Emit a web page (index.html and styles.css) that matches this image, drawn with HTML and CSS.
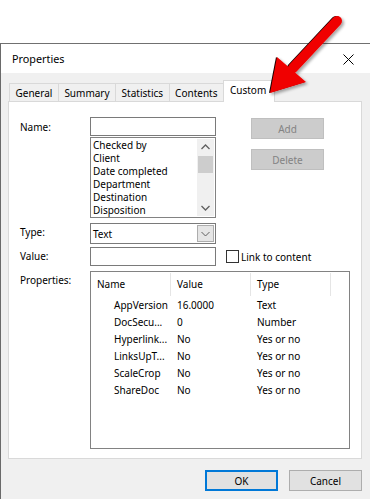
FILE: index.html
```html
<html>
    <head>
        <link rel="stylesheet" href="styles.css">
    </head>
    <body>
        <div class="window">
            <div class="titlebar">
                <span class="title">Properties</span>
                <svg class="close" width="11" height="11" viewBox="0 0 11 11">
                    <path d="M0.5 0.5 L10.5 10.5 M10.5 0.5 L0.5 10.5" stroke="#000" stroke-width="1"/>
                </svg>
            </div>
            <div class="client">
                <div class="tabs">
                    <span class="tab">General</span>
                    <span class="tab">Summary</span>
                    <span class="tab">Statistics</span>
                    <span class="tab">Contents</span>
                    <span class="tab active">Custom</span>
                </div>
                <div class="panel">
                    <div class="form">
                        <span class="label name-label">Name:</span>
                        <div class="field name-field"></div>
                        <div class="actions">
                            <button type="button" class="btn disabled">Add</button>
                            <button type="button" class="btn disabled">Delete</button>
                        </div>

                        <div class="listbox">
                            <div class="items">
                                <div>Checked by</div>
                                <div>Client</div>
                                <div>Date completed</div>
                                <div>Department</div>
                                <div>Destination</div>
                                <div>Disposition</div>
                            </div>
                            <div class="scrollbar">
                                <svg width="17" height="17" viewBox="0 0 17 17"><path d="M4.5 10 L8.5 6 L12.5 10" stroke="#606060" stroke-width="1.3" fill="none"/></svg>
                                <div class="thumb"></div>
                                <div class="track"></div>
                                <svg width="17" height="17" viewBox="0 0 17 17"><path d="M4.5 7 L8.5 11 L12.5 7" stroke="#606060" stroke-width="1.3" fill="none"/></svg>
                            </div>
                        </div>

                        <span class="label type-label">Type:</span>
                        <div class="select">
                            <span class="select-text">Text</span>
                            <span class="drop">
                                <svg width="17" height="17" viewBox="0 0 17 17"><path d="M4.5 7 L8.5 11 L12.5 7" stroke="#606060" stroke-width="1" fill="none"/></svg>
                            </span>
                        </div>

                        <span class="label value-label">Value:</span>
                        <div class="field value-field"></div>
                        <div class="link">
                            <span class="check"></span>
                            <span>Link to content</span>
                        </div>

                        <span class="label props-label">Properties:</span>
                        <div class="listview">
                            <div class="lv-head">
                                <span>Name</span>
                                <span>Value</span>
                                <span>Type</span>
                            </div>
                            <div class="lv-row"><span class="lv-name">AppVersion</span><span>16.0000</span><span>Text</span></div>
                            <div class="lv-row"><span class="lv-name">DocSecu...</span><span>0</span><span>Number</span></div>
                            <div class="lv-row"><span class="lv-name">Hyperlink...</span><span>No</span><span>Yes or no</span></div>
                            <div class="lv-row"><span class="lv-name">LinksUpT...</span><span>No</span><span>Yes or no</span></div>
                            <div class="lv-row"><span class="lv-name">ScaleCrop</span><span>No</span><span>Yes or no</span></div>
                            <div class="lv-row"><span class="lv-name">ShareDoc</span><span>No</span><span>Yes or no</span></div>
                        </div>
                    </div>
                </div>
                <div class="footer">
                    <button type="button" class="btn ok">OK</button>
                    <button type="button" class="btn">Cancel</button>
                </div>
            </div>
        </div>

        <!-- annotation arrow drawn over the dialog -->
        <svg class="arrow" width="370" height="110" viewBox="0 0 370 110">
            <defs>
                <filter id="shadow" x="-20%" y="-20%" width="140%" height="140%">
                    <feGaussianBlur in="SourceAlpha" stdDeviation="1.6"/>
                    <feOffset dx="2" dy="2"/>
                    <feComponentTransfer><feFuncA type="linear" slope="0.35"/></feComponentTransfer>
                    <feMerge><feMergeNode/><feMergeNode in="SourceGraphic"/></feMerge>
                </filter>
            </defs>
            <g filter="url(#shadow)">
                <g transform="translate(-1,0)" fill="#1a0000" stroke="#1a0000">
                    <line x1="337" y1="21" x2="293" y2="68" stroke-width="10" stroke-linecap="round"/>
                    <polygon points="270,93 277,57 306,82" stroke="none"/>
                </g>
                <g fill="#f00000" stroke="#f00000">
                    <line x1="337" y1="21" x2="293" y2="68" stroke-width="10" stroke-linecap="round"/>
                    <polygon points="270,93 277,57 306,82" stroke="none"/>
                </g>
            </g>
        </svg>
    </body>
</html>
```

FILE: styles.css
```css
body{
    margin: 0;
    background: #fff;
    overflow: hidden;
    font-family: "Noto Sans", "Segoe UI", sans-serif;
    font-size: 10px;
    color: #000;
}
.window{
    margin-top: 43px;
    width: 372px;
    border-top: 1px solid #707070;
    border-left: 1px solid #6a6a6a;
}
.titlebar{
    height: 29px;
    background: #fff;
    display: flex;
    align-items: center;
    justify-content: space-between;
    padding: 0 19px 0 11px;
}
.title{
    font-size: 10.8px;
}
.close{
    display: block;
    margin-top: 1px;
}
.client{
    background: #f0f0f0;
    padding: 7px 0 9px 7px;
}
.tabs{
    display: flex;
    align-items: flex-end;
    height: 21px;
    margin-left: 1px;
}
.tab{
    height: 18px;
    line-height: 18px;
    padding: 0 5.5px;
    border: 1px solid #d9d9d9;
    border-bottom: none;
    border-right: none;
    background: #f0f0f0;
    box-sizing: border-box;
}
.tab.active{
    height: 22px;
    line-height: 18px;
    margin-bottom: -1px;
    background: #fff;
    border-right: 1px solid #d9d9d9;
    position: relative;
    padding: 0 8px 0 6px;
}
.panel{
    width: 354px;
    height: 358px;
    box-sizing: border-box;
    border: 1px solid #d9d9d9;
    background: #fff;
}
.form{
    display: grid;
    grid-template-columns: 70px 126px 1fr;
    padding: 15px 0 0 11px;
}
.label{
    grid-column: 1;
    line-height: 16px;
}
.name-label{
    grid-row: 1;
    align-self: center;
}
.name-field{
    grid-row: 1;
    grid-column: 2;
}
.field{
    height: 19px;
    box-sizing: border-box;
    border: 1px solid #7a7a7a;
}
.actions{
    grid-row: 1 / span 2;
    grid-column: 3;
    display: flex;
    flex-direction: column;
    gap: 10px;
    padding: 1px 0 0 35px;
    align-items: flex-start;
}
.btn{
    width: 73px;
    height: 21px;
    box-sizing: border-box;
    font-family: inherit;
    font-size: 10px;
    background: #e1e1e1;
    border: 1px solid #adadad;
    color: #000;
    padding: 0;
    margin: 0;
}
.btn.disabled{
    background: #cccccc;
    border-color: #bfbfbf;
    color: #838383;
}
.listbox{
    grid-row: 2;
    grid-column: 2;
    margin-top: 1px;
    height: 81px;
    box-sizing: border-box;
    border: 1px solid #828282;
    display: flex;
}
.items{
    flex: 1;
    padding: 1px 0 0 2px;
    line-height: 13px;
    overflow: hidden;
}
.scrollbar{
    width: 17px;
    background: #f0f0f0;
    display: flex;
    flex-direction: column;
    margin: 1px 1px 1px 0;
}
.scrollbar svg{
    display: block;
}
.thumb{
    height: 17px;
    margin: 0 1px;
    background: #cdcdcd;
}
.track{
    flex: 1;
}
.type-label{
    grid-row: 3;
    margin-top: 6px;
}
.select{
    grid-row: 3;
    grid-column: 2;
    margin-top: 5px;
    height: 21px;
    box-sizing: border-box;
    border: 1px solid #7a7a7a;
    display: flex;
    align-items: center;
    justify-content: space-between;
    padding-left: 2px;
}
.drop{
    width: 17px;
    height: 17px;
    margin-right: 1px;
    box-sizing: border-box;
    background: #e5e5e5;
    border: 1px solid #adadad;
    display: flex;
    align-items: center;
    justify-content: center;
}
.drop svg{
    display: block;
    margin: -1px;
}
.value-label{
    grid-row: 4;
    margin-top: 4px;
}
.value-field{
    grid-row: 4;
    grid-column: 2;
    margin-top: 3px;
    height: 19px;
}
.link{
    grid-row: 4;
    grid-column: 3;
    display: flex;
    align-items: center;
    gap: 2px;
    padding: 3px 0 0 10px;
}
.check{
    width: 13px;
    height: 13px;
    box-sizing: border-box;
    border: 1px solid #333;
    background: #fff;
}
.props-label{
    grid-row: 5;
    margin-top: 6px;
    align-self: start;
}
.listview{
    grid-row: 5;
    grid-column: 2 / span 2;
    margin-top: 5px;
    width: 260px;
    height: 178px;
    box-sizing: border-box;
    border: 1px solid #828282;
}
.lv-head,
.lv-row{
    display: grid;
    grid-template-columns: 80px 80px 80px;
}
.lv-head{
    height: 25px;
    align-items: center;
    padding-top: 1px;
    box-sizing: border-box;
}
.lv-head span{
    padding-left: 6px;
    border-right: 1px solid #e5e5e5;
    line-height: 23px;
    margin-top: -2px;
}
.lv-row{
    height: 17px;
    line-height: 17px;
}
.lv-row span{
    padding-left: 6px;
    white-space: nowrap;
}
.lv-row .lv-name{
    padding-left: 23px;
}
.footer{
    width: 354px;
    display: flex;
    justify-content: flex-end;
    gap: 11px;
    margin-top: 11px;
}
.ok{
    border: 2px solid #0078d7;
}
.arrow{
    position: absolute;
    left: 0;
    top: 0;
}
```
